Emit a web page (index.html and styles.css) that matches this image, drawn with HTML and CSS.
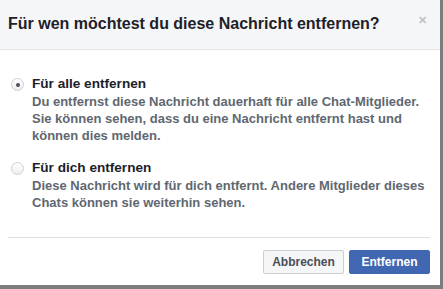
FILE: index.html
```html
<!DOCTYPE html>
<html lang="de">
<head>
  <meta charset="UTF-8" />
  <title>Nachricht entfernen</title>
  <link rel="stylesheet" href="styles.css">
</head>
<body>
  <div class="dialog">
    <!-- Kopfzeile mit Titel und Schliessen-Kreuz -->
    <header class="dialog-head">
      <h1>Für wen möchtest du diese Nachricht entfernen?</h1>
      <span class="close">&#x2715;</span>
    </header>

    <div class="dialog-body">
      <label class="option">
        <span class="radio checked"></span>
        <span class="option-text">
          <span class="option-title">Für alle entfernen</span>
          <span class="option-desc">Du entfernst diese Nachricht dauerhaft für alle Chat-Mitglieder. Sie können sehen, dass du eine Nachricht entfernt hast und können dies melden.</span>
        </span>
      </label>
      <label class="option">
        <span class="radio"></span>
        <span class="option-text">
          <span class="option-title">Für dich entfernen</span>
          <span class="option-desc">Diese Nachricht wird für dich entfernt. Andere Mitglieder dieses Chats können sie weiterhin sehen.</span>
        </span>
      </label>
    </div>

    <footer class="dialog-foot">
      <button class="btn">Abbrechen</button>
      <button class="btn btn-primary">Entfernen</button>
    </footer>
  </div>
</body>
</html>
```

FILE: styles.css
```css
:root {
  --blue: #4267b2;
  --grey-text: #606770;
  --line: #dddfe2;
}

body {
  margin: 0;
  background: #7d7d7d;
  font-family: 'Liberation Sans', Arial, sans-serif;
  color: #1d2129;
}

.dialog {
  width: 440px;
  height: 285px;
  background: #fff;
  display: flex;
  flex-direction: column;
}

/* Kopfzeile */
.dialog-head {
  height: 47px;
  background: #f5f6f7;
  border-bottom: 1px solid #e5e5e5;
  display: flex;
  align-items: center;
  justify-content: space-between;
  padding: 0 13px 2px 8px;
}

.dialog-head h1 {
  margin: 0;
  font-size: 16px;
  font-weight: bold;
  color: #1d2129;
}

.close {
  color: #bec3c9;
  font-size: 11px;
  font-weight: bold;
  margin-bottom: 6px;
}

/* Optionen */
.dialog-body {
  padding: 25px 0 0 11px;
  flex: 1;
}

.option {
  display: flex;
  gap: 8px;
  margin-bottom: 15px;
}

.radio {
  width: 11px;
  height: 11px;
  margin-top: 3px;
  border: 1px solid #ccd0d5;
  border-radius: 50%;
  background: linear-gradient(#fff, #eceef0);
  position: relative;
  flex-shrink: 0;
}

.radio.checked::after {
  content: "";
  position: absolute;
  left: 3.5px;
  top: 3.5px;
  width: 4px;
  height: 4px;
  border-radius: 50%;
  background: #4b4f56;
}

.option-text {
  display: flex;
  flex-direction: column;
  width: 400px;
}

.option-title {
  font-size: 13.6px;
  font-weight: bold;
  color: #1d2129;
  line-height: 18px;
}

.option-desc {
  font-size: 13px;
  font-weight: bold;
  color: var(--grey-text);
  line-height: 17px;
}

/* Fusszeile mit Buttons */
.dialog-foot {
  margin: 0 10px 0 8px;
  border-top: 1px solid var(--line);
  padding: 12px 0 11px;
  display: flex;
  justify-content: flex-end;
  gap: 5px;
}

.btn {
  height: 24px;
  width: 81px;
  font-family: inherit;
  font-size: 12px;
  font-weight: bold;
  border: 1px solid #ccd0d5;
  border-radius: 2px;
  background: #f5f6f7;
  color: #4b4f56;
  padding: 0;
}

.btn-primary {
  background: var(--blue);
  border-color: var(--blue);
  color: #fff;
}
```
